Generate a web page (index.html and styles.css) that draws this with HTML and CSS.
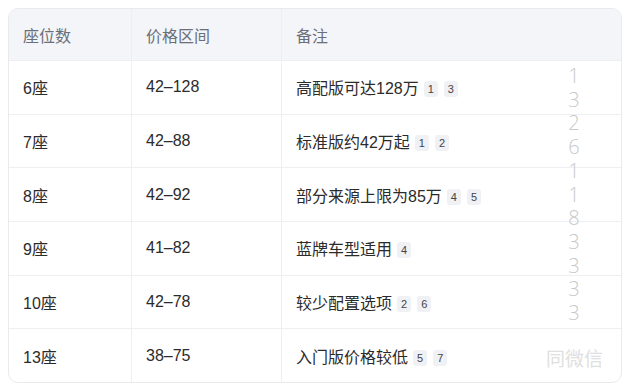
FILE: index.html
```html
<!DOCTYPE html>
<html lang="zh">
<head>
<meta charset="utf-8">
<link rel="stylesheet" href="styles.css">
</head>
<body>
<div class="wrap">
  <table class="tbl">
    <colgroup><col class="c1"><col class="c2"><col class="c3"></colgroup>
    <thead>
      <tr><th>座位数</th><th>价格区间</th><th>备注</th></tr>
    </thead>
    <tbody>
      <tr><td>6座</td><td>42–128</td><td>高配版可达128万<span class="b">1</span><span class="b">3</span></td></tr>
      <tr><td>7座</td><td>42–88</td><td>标准版约42万起<span class="b">1</span><span class="b">2</span></td></tr>
      <tr><td>8座</td><td>42–92</td><td>部分来源上限为85万<span class="b">4</span><span class="b">5</span></td></tr>
      <tr><td>9座</td><td>41–82</td><td>蓝牌车型适用<span class="b">4</span></td></tr>
      <tr><td>10座</td><td>42–78</td><td>较少配置选项<span class="b">2</span><span class="b">6</span></td></tr>
      <tr><td>13座</td><td>38–75</td><td>入门版价格较低<span class="b">5</span><span class="b">7</span></td></tr>
    </tbody>
  </table>
  <div class="wm-digits">1<br>3<br>2<br>6<br>1<br>1<br>8<br>3<br>3<br>3<br>3</div>
  <div class="wm-text">同微信</div>
</div>
</body>
</html>
```
FILE: styles.css
```css
html, body { margin: 0; padding: 0; background: #fff; }
body { padding: 8px; font-family: "Liberation Sans", Arial, "Noto Sans CJK SC", sans-serif; }
.wrap { position: relative; }
.tbl {
  width: 100%;
  border-collapse: separate;
  border-spacing: 0;
  border: 1px solid #e9eaee;
  border-radius: 10px;
  overflow: hidden;
  table-layout: fixed;
  font-size: 16px;
}
.c1 { width: 123px; }
.c2 { width: 150px; }
th, td {
  text-align: left;
  padding: 0 0 0 14px;
  border-right: 1px solid #eeeff2;
  border-bottom: 1px solid #eeeff2;
}
th:last-child, td:last-child { border-right: none; }
tbody tr:last-child td { border-bottom: none; }
th {
  background: #f4f5f9;
  color: #6b6f7a;
  font-weight: normal;
  height: 51px;
}
td { color: #2b2b2b; height: 52.7px; }
.b {
  display: inline-block;
  font-size: 11px;
  line-height: 16px;
  padding: 0 4px;
  text-align: center;
  background: #f0f1f5;
  color: #444;
  border-radius: 3px;
  margin-left: 5px;
  vertical-align: 1px;
}
.b + .b { margin-left: 6px; }
.wm-digits {
  position: absolute;
  left: 556px;
  top: 56px;
  width: 20px;
  text-align: center;
  font-family: "Open Sans", sans-serif;
  font-weight: 300;
  font-size: 20px;
  line-height: 23.7px;
  color: #c9c9c9;
  pointer-events: none;
}
.wm-text {
  position: absolute;
  left: 538px;
  top: 336px;
  font-family: "Noto Sans CJK SC", sans-serif;
  font-size: 19px;
  color: #e0e0e0;
  pointer-events: none;
}
```
